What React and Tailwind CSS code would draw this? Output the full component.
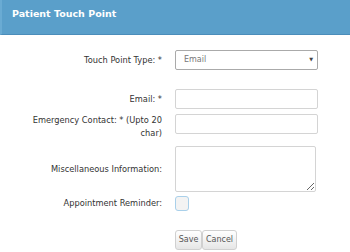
import React, { useState } from "react";

const labelCls = "w-[162px] shrink-0 text-right text-[8.25px] leading-[13px] text-[#333]";
const inputCls =
  "block w-[143px] h-[20px] border border-[#d4d4d4] rounded-[2px] bg-white px-2 py-0 text-[8px] text-[#555] outline-none";

export default function App() {
  const [type, setType] = useState("Email");
  const [reminder, setReminder] = useState(false);

  return (
    <div className="w-[350px] h-[252px] overflow-hidden bg-white" style={{ fontFamily: '"DejaVu Sans", Verdana, sans-serif' }}>
      {/* Header */}
      <div className="h-[35px] bg-[#5a9fca] border-b border-[#4b8dba] border-l-2 border-l-[#6aabd3] pl-[10px] pt-[7px]">
        <h1 className="text-[9.5px] font-bold text-white leading-[13px]">Patient Touch Point</h1>
      </div>

      <form className="flex flex-col" onSubmit={(e) => e.preventDefault()}>
        {/* Touch point type */}
        <div className="flex items-center gap-[13px] mt-[15px] h-[20px]">
          <label className={labelCls}>Touch Point Type: *</label>
          <div className="relative w-[143px] h-[20px]">
            <select
              value={type}
              onChange={(e) => setType(e.target.value)}
              className="appearance-none block w-[143px] h-[20px] border border-[#aaa] rounded-[2px] bg-white pl-2 py-0 leading-[18px] text-[8px] text-[#777] outline-none"
            >
              <option>Email</option>
              <option>Phone</option>
              <option>SMS</option>
            </select>
            <span className="absolute right-[5px] top-[7px] text-[5px] leading-[5px] text-[#444] pointer-events-none">▼</span>
          </div>
        </div>

        {/* Email */}
        <div className="flex items-center gap-[13px] mt-[19px]">
          <label className={labelCls}>Email: *</label>
          <input type="text" className={inputCls} />
        </div>

        {/* Emergency contact */}
        <div className="flex items-start gap-[13px] mt-[5px]">
          <label className={labelCls}>
            Emergency Contact: * (Upto 20
            <br />
            char)
          </label>
          <input type="text" maxLength={20} className={inputCls} />
        </div>

        {/* Misc */}
        <div className="flex items-center gap-[13px] mt-[6px]">
          <label className={labelCls}>Miscellaneous Information:</label>
          <textarea className="block w-[141px] h-[46px] border border-[#d4d4d4] rounded-[2px] bg-white px-2 text-[8px] outline-none resize-y" />
        </div>

        {/* Reminder */}
        <div className="flex items-center gap-[13px] mt-[4px]">
          <label className={labelCls}>Appointment Reminder:</label>
          <button
            type="button"
            onClick={() => setReminder(!reminder)}
            className="w-[14px] h-[15px] rounded-[3px] border border-[#a9d0ea] bg-[#f3f3f3] flex items-center justify-center text-[9px] text-[#333]"
          >
            {reminder ? "✓" : ""}
          </button>
        </div>

        {/* Buttons */}
        <div className="flex mt-[19px] ml-[175px]">
          <button
            type="submit"
            className="h-[20px] w-[27px] border border-[#d0d0d0] rounded-[3px] bg-gradient-to-b from-white to-[#e6e6e6] text-[8px] leading-[18px] text-[#555]"
          >
            Save
          </button>
          <button
            type="button"
            className="h-[20px] w-[35px] border border-[#d0d0d0] rounded-[3px] bg-gradient-to-b from-white to-[#e6e6e6] text-[8px] leading-[18px] text-[#555]"
          >
            Cancel
          </button>
        </div>
      </form>
    </div>
  );
}
